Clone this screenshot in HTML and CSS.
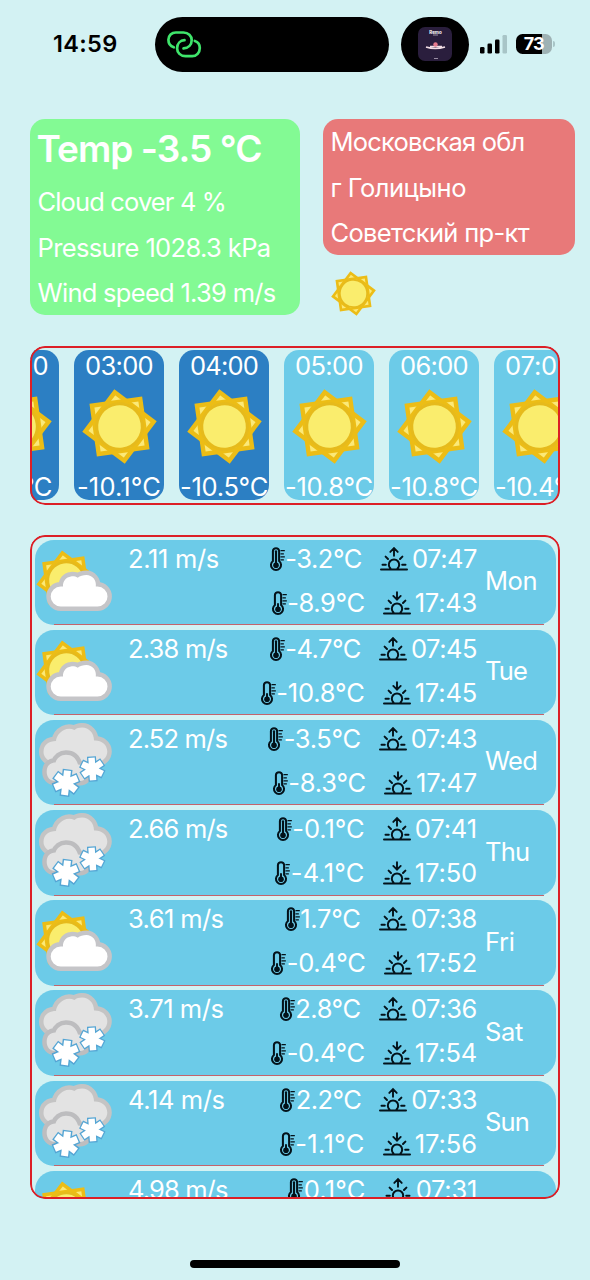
FILE: index.html
```html
<!DOCTYPE html>
<html lang="en">
<head>
<meta charset="utf-8">
<title>Weather</title>
<link rel="stylesheet" href="styles.css">
</head>
<body>
<svg class="defs" width="0" height="0">
  <symbol id="sun" viewBox="-37.5 -37.5 75 75">
    <g transform="rotate(-8)">
      <g fill="#fbe978"><path d="M0-34.5 34.5 0 0 34.5-34.5 0Z"/><path d="M-24.4-24.4H24.4V24.4H-24.4Z"/></g>
      <g fill="none" stroke="#ecbd16" stroke-width="4.400"><path d="M0-34.5 34.5 0 0 34.5-34.5 0Z"/><path d="M-24.4-24.4H24.4V24.4H-24.4Z"/></g>
      <circle r="22.8" fill="#faed6d" stroke="#e6ba1c" stroke-width="3"/>
    </g>
  </symbol>
  <symbol id="partly" viewBox="0 0 75 75">
    <use href="#sun" x="-1.8" y="6.300" width="60" height="60"/>
    <path d="M22.7 62.5H59.5A10 10 0 0 0 59.5 42.5H57.8C58.8 36 54 31 48.5 31 45 31 42 32 39.7 33.8 37.5 32.3 35 32 33 32.4 28 33 24.7 37 25 42.5H22.7A10 10 0 0 0 22.7 62.5Z" fill="#fff" stroke="#c5c5c8" stroke-width="8.800" stroke-linejoin="round" paint-order="stroke"/>
  </symbol>
  <symbol id="snow" viewBox="0 0 75 75">
    <g fill="#e3e3e3" stroke-linejoin="round" paint-order="stroke" stroke-width="9">
      <path d="M17 38H58C65 38 69.3 33 69.3 27.5 69.3 20.5 63 16 56 16.500 56 9 51 3.500 44 3.500 41 3.500 38.500 4.200 36.500 6 33 4.200 29 4.500 26 6 21 8.500 18.500 12.500 18 17 11 17 5.500 20.500 5.500 28 5.500 34 11 38 17 38Z" stroke="#c4c4c4"/>
      <path d="M17 57H42C47 57 50 53 50 49 50 44 46 41 40 40.500 38 34 34 30.800 28 30.800 23 30.800 19 34 17.500 38.500 12 38.500 8.700 42 8.700 48 8.700 53 12 57 17 57Z" stroke="#bdbdbf"/>
    </g>
    <g transform="translate(28 58.800) rotate(7)">
      <path d="M0-13.600V13.600M-11.800-6.800 11.800 6.800M-11.800 6.800 11.800-6.800" stroke="#54a5d4" stroke-width="9.800"/>
      <path d="M0-12.300V12.300M-10.700-6.150 10.700 6.150M-10.700 6.150 10.700-6.150" stroke="#fff" stroke-width="7"/>
    </g>
    <g transform="translate(54.300 45) rotate(-4) scale(.92)">
      <path d="M0-13.600V13.600M-11.800-6.800 11.800 6.800M-11.800 6.800 11.800-6.800" stroke="#54a5d4" stroke-width="9.800"/>
      <path d="M0-12.300V12.300M-10.700-6.150 10.700 6.150M-10.700 6.150 10.700-6.150" stroke="#fff" stroke-width="7"/>
    </g>
  </symbol>
  <symbol id="thermo-high" viewBox="0 0 16 25">
    <path d="M3 14V4a3.200 3.200 0 0 1 6.400 0V14a5.200 5.200 0 1 1-6.400 0Z" fill="none" stroke="#03121a" stroke-width="2.100"/>
    <circle cx="6.200" cy="18.400" r="2.900" fill="#03121a"/>
    <path d="M6.200 4V18" stroke="#03121a" stroke-width="2.200" stroke-linecap="round"/>
    <path d="M10.800 3.400H15.300M10.800 6.600H14.300M10.800 9.800H15.300M10.800 13H14.300" stroke="#03121a" stroke-width="1.300"/>
  </symbol>
  <symbol id="thermo-low" viewBox="0 0 16 25">
    <path d="M3 14V4a3.200 3.200 0 0 1 6.400 0V14a5.200 5.200 0 1 1-6.400 0Z" fill="none" stroke="#03121a" stroke-width="2.100"/>
    <circle cx="6.200" cy="18.400" r="2.900" fill="#03121a"/>
    <path d="M6.200 13V18" stroke="#03121a" stroke-width="2" stroke-linecap="round"/>
    <path d="M10.800 3.400H15.300M10.800 6.600H14.300M10.800 9.800H15.300M10.800 13H14.300" stroke="#03121a" stroke-width="1.300"/>
  </symbol>
  <symbol id="horizon" viewBox="0 0 28 25">
    <path d="M1 22.500H27M10.500 21.500A5.200 5.200 0 1 1 17.500 21.500M2.500 17.700H5.800M22.200 17.700H25.500M5.600 9.600 8 12M22.400 9.600 20 12" fill="none" stroke="#03121a" stroke-width="2" stroke-linecap="round"/>
  </symbol>
  <symbol id="sunrise" viewBox="0 0 28 25">
    <use href="#horizon" width="28" height="25"/>
    <path d="M14 8.800V1.500M10.300 4.900 14 1.200 17.700 4.900" fill="none" stroke="#03121a" stroke-width="1.900" stroke-linecap="round"/>
  </symbol>
  <symbol id="sunset" viewBox="0 0 28 25">
    <use href="#horizon" width="28" height="25"/>
    <path d="M14 1.200V8.200M10.300 4.900 14 8.600 17.700 4.900" fill="none" stroke="#03121a" stroke-width="1.900" stroke-linecap="round"/>
  </symbol>
</svg>

<header class="status">
  <span class="clock" data-w="64.500">14:59</span>
  <div class="island">
    <svg width="36" height="30" viewBox="0 0 36 30" fill="none" stroke="#3fe56b" stroke-width="2.700" stroke-linecap="round">
      <path d="M6.800 17.300C2.800 16 1.400 12.300 1.400 9.800 1.400 5.500 4.700 2.500 8.800 2.500H16.500C21.300 2.500 24.700 5.800 24.700 10 24.700 14.800 21.500 18.200 16.500 18.400"/>
      <path d="M27.800 11C31 12 32.800 15 32.800 18 32.800 22.500 29.500 26.200 25.200 26.200H18.500C13.500 26.200 10.100 22.700 10.100 18.300 10.100 13.600 13.300 10.400 17.500 10.200"/>
    </svg>
  </div>
  <div class="bubble">
    <svg width="34" height="34" viewBox="0 0 34 34">
      <rect width="34" height="34" rx="7" fill="#2a1e3d"/>
      <text x="17.500" y="6.500" class="app-name">Remo</text>
      <path d="M15 8H20M16 31.500H20" stroke="#b6a9be" stroke-width=".8"/>
      <path d="M8 20Q17 23 27 20M12 19.500H24" stroke="#f3dfe6" stroke-width="1.600" fill="none"/>
      <circle cx="17.500" cy="17.500" r="2.200" fill="#e67a8c"/>
    </svg>
  </div>
  <svg class="signal" width="28" height="19" viewBox="0 0 28 19">
    <rect x="0" y="12" width="4.500" height="6.500" rx="1.300"/><rect x="7.500" y="8.500" width="4.500" height="10" rx="1.300"/><rect x="15" y="4.500" width="4.500" height="14" rx="1.300"/><rect x="22.500" y="0" width="4.500" height="18.500" rx="1.300" fill="#a8c5c7"/>
  </svg>
  <div class="battery"><span>73</span></div>
  <i class="nub"></i>
</header>

<main>
  <section class="summary">
    <div class="card now">
      <h1><span data-w="225">Temp -3.5 °C</span></h1>
      <p><span data-w="188.500">Cloud cover 4 %</span></p>
      <p><span data-w="233">Pressure 1028.3 kPa</span></p>
      <p><span data-w="238">Wind speed 1.39 m/s</span></p>
    </div>
    <div class="side">
      <div class="card place">
        <p><span data-w="194">Московская обл</span></p>
        <p><span data-w="135.500">г Голицыно</span></p>
        <p><span data-w="198.500">Советский пр-кт</span></p>
      </div>
      <svg class="mini-sun"><use href="#sun"/></svg>
    </div>
  </section>
  <section class="frame hours" id="hours"></section>
  <section class="frame days" id="days"></section>
</main>
<div class="home"></div>
<script src="app.js"></script>
</body>
</html>
```
FILE: styles.css
```css
* { box-sizing: border-box; }
html, body { margin: 0; height: 100%; }
body {
  width: 590px;
  height: 1280px;
  overflow: hidden;
  display: flex;
  flex-direction: column;
  background: #d3f2f3;
  color: #fff;
  font: 400 25.5px/45.5px Inter, "Noto Sans", sans-serif;
}
svg { display: block; flex: none; overflow: visible; }
symbol { overflow: visible; }
.defs { position: absolute; }
h1, p { margin: 0; }
h1 span, p span { white-space: pre; }

.status { display: flex; height: 119px; padding: 17px 0 0 53px; }
.clock { width: 102px; color: #000; font-size: 23.5px; font-weight: 600; line-height: 54px; white-space: pre; }
.island { width: 234px; height: 55px; border-radius: 28px; background: #000; padding: 13px 0 0 12px; }
.bubble { width: 68px; height: 55px; margin-left: 12px; border-radius: 28px; background: #000; padding: 10px 17px; }
.app-name { font: 700 4.500px Inter, sans-serif; text-anchor: middle; fill: #fff; }
.signal { margin: 18px 0 0 11px; }
.battery {
  width: 35.5px; height: 20px; margin: 17px 0 0 8px; border-radius: 6.5px;
  background: linear-gradient(90deg, #000 26px, #9eb2b4 26px);
  text-align: center; font-size: 18px; font-weight: 700; line-height: 20px; letter-spacing: -.8px;
}
.nub { width: 2.500px; height: 6px; margin: 24px 0 0 1px; border-radius: 0 3px 3px 0; background: #a8c5c7; }

.summary { display: flex; gap: 23px; padding-left: 30px; height: 227px; }
.card { border-radius: 15px; padding-left: 7.5px; }
.now { width: 270px; height: 196px; background: #83fa94; }
.now h1 { font-size: 37px; font-weight: 600; line-height: 60px; }
.now h1 span { margin-left: -1px; }
.place { width: 252px; height: 136px; background: #e87979; }
.mini-sun { width: 45px; height: 45px; margin: 15.5px 0 0 7.5px; }

.frame { position: relative; width: 530px; margin-left: 30px; border-radius: 15px; overflow: hidden; }
.frame::after { content: ""; position: absolute; inset: 0; border: 2px solid #dc1f26; border-radius: 15px; }
.hours { height: 159px; display: flex; gap: 15px; padding: 4px 0 0; }
.hour {
  flex: none; width: 90px; height: 150px; border-radius: 15px; background: #6ccbe8;
  display: flex; flex-direction: column; justify-content: space-between; align-items: center;
  line-height: 32px; white-space: pre;
}
.hour:first-child { margin-left: -61px; }
.hour.night { background: #2c7fc3; }
.hour svg { width: 75px; height: 75px; margin-bottom: 2.5px; }
.hour span:last-child { line-height: 27px; }

.days { height: 664px; margin-top: 30px; padding: 4.5px 4.5px 0; display: flex; flex-direction: column; gap: 4.7px; }
.day {
  flex: none; position: relative; height: 85.5px; border-radius: 19px; background: #6ccbe8;
  display: flex; line-height: 37px; white-space: pre;
}
.day::after { content: ""; position: absolute; left: 19px; right: 12px; bottom: 0; height: 1px; background: #c4646c; }
.weather { width: 75px; height: 75px; margin: 4px 0 0 3.5px; }
.wind { width: 99.5px; margin-left: 15px; }
.range { width: 250.5px; display: flex; flex-direction: column; gap: 7px; }
.line { display: flex; justify-content: flex-end; height: 37px; }
.line span { margin-right: 1px; }
.thermo { width: 15.5px; height: 25px; margin-top: 7px; }
.horizon { width: 28px; height: 25px; margin: 7px 4px 0 17px; }
.name { margin: 22.5px 0 0 7px; }

.home { width: 210px; height: 8px; margin: 61px 0 0 190px; border-radius: 4px; background: #000; }
```
FILE: app.js
```js
const hours = [
  ["02:00", "-9.8°C", 1, 76],
  ["03:00", "-10.1°C", 1, 84],
  ["04:00", "-10.5°C", 1, 88],
  ["05:00", "-10.8°C", 0, 88],
  ["06:00", "-10.8°C", 0, 88],
  ["07:00", "-10.4°C", 0, 88],
];

// Each range line: temperature, thermometer x, time, horizon icon x.
const days = [
  ["Mon", "partly", "2.11 m/s", 91, ["-3.2°C", 270, "07:47", 380.3], ["-8.9°C", 272, "17:43", 383]],
  ["Tue", "partly", "2.38 m/s", 99.5, ["-4.7°C", 270, "07:45", 379.3], ["-10.8°C", 261, "17:45", 383]],
  ["Wed", "snow", "2.52 m/s", 99, ["-3.5°C", 268.5, "07:43", 379], ["-8.3°C", 273, "17:47", 384.3]],
  ["Thu", "snow", "2.66 m/s", 99.5, ["-0.1°C", 277, "07:41", 383], ["-4.1°C", 275.5, "17:50", 383]],
  ["Fri", "partly", "3.61 m/s", 95.5, ["1.7°C", 285, "07:38", 379], ["-0.4°C", 271.5, "17:52", 384]],
  ["Sat", "snow", "3.71 m/s", 95.5, ["2.8°C", 280, "07:36", 379], ["-0.4°C", 271.5, "17:54", 383]],
  ["Sun", "snow", "4.14 m/s", 96.5, ["2.2°C", 280.5, "07:33", 379.5], ["-1.1°C", 280, "17:56", 383]],
  ["Mon", "partly", "4.98 m/s", 99.5, ["0.1°C", 288.5, "07:31", 384], ["-2.1°C", 277, "17:58", 383]],
];

const names = { Mon: 52, Tue: 42, Wed: 52, Thu: 44.5, Fri: 29.5, Sat: 38, Sun: 44 };
const icon = (id, cls) => `<svg class="${cls}"><use href="#${id}"/></svg>`;
const line = ([temp, tx, time, sx], thermo, horizon) =>
  `<div class="line">${icon(thermo, "thermo")}<span data-w="${sx - tx - 33.5}">${temp}</span>` +
  `${icon(horizon, "horizon")}<span data-w="${445.3 - sx}">${time}</span></div>`;

document.getElementById("hours").innerHTML = hours.map(([t, c, night, w]) =>
  `<div class="hour${night ? " night" : ""}"><span data-w="68">${t}</span>${icon("sun", "")}<span data-w="${w}">${c}</span></div>`
).join("");

document.getElementById("days").innerHTML = days.map(([name, kind, wind, w, high, low]) =>
  `<article class="day">${icon(kind, "weather")}<div class="wind"><span data-w="${w}">${wind}</span></div>` +
  `<div class="range">${line(high, "thermo-high", "sunrise")}${line(low, "thermo-low", "sunset")}</div>` +
  `<div class="name"><span data-w="${names[name]}">${name}</span></div></article>`
).join("");

// Tune tracking so each label takes its intended width.
document.querySelectorAll("[data-w]").forEach((el) => {
  const range = document.createRange();
  range.selectNodeContents(el);
  const natural = range.getBoundingClientRect().width;
  el.style.letterSpacing = (el.dataset.w - natural) / el.textContent.length + "px";
});
```
